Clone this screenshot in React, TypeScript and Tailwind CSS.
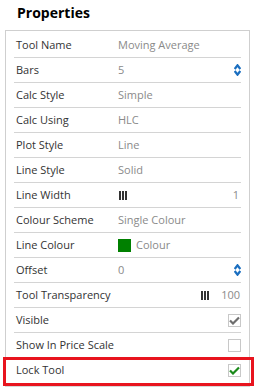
import React from "react";

const Bars = () => (
  <svg width="8" height="9" viewBox="0 0 8 9" className="inline-block">
    <rect x="0" y="0" width="2" height="9" fill="#333" />
    <rect x="3" y="0" width="2" height="9" fill="#333" />
    <rect x="6" y="0" width="2" height="9" fill="#333" />
  </svg>
);

const Spinner = () => (
  <svg width="7" height="12" viewBox="0 0 7 12">
    <path d="M0.7 5 L3.5 1.3 L6.3 5" fill="none" stroke="#1b6fc0" strokeWidth="2.2" />
    <path d="M0.7 7 L3.5 10.7 L6.3 7" fill="none" stroke="#1b6fc0" strokeWidth="2.2" />
  </svg>
);

const Check = ({ color, checked, border }: { color: string; checked: boolean; border: string }) => (
  <div className={`w-[13px] h-[13px] border ${border} bg-white flex items-center justify-center`}>
    {checked && (
      <svg width="11" height="9" viewBox="0 0 11 9">
        <path d="M1 4.5 L4 7.5 L10 1.5" fill="none" stroke={color} strokeWidth="2.2" />
      </svg>
    )}
  </div>
);

type Row = { label: string; value?: React.ReactNode; right?: React.ReactNode };

const rows: Row[] = [
  { label: "Tool Name", value: "Moving Average" },
  { label: "Bars", value: "5", right: <Spinner /> },
  { label: "Calc Style", value: "Simple" },
  { label: "Calc Using", value: "HLC" },
  { label: "Plot Style", value: "Line" },
  { label: "Line Style", value: "Solid" },
  {
    label: "Line Width",
    value: (
      <span className="pl-[1px] flex items-center">
        <Bars />
      </span>
    ),
    right: <span className="text-[#8a8a8a] pr-[2px]">1</span>,
  },
  { label: "Colour Scheme", value: "Single Colour" },
  {
    label: "Line Colour",
    value: (
      <span className="flex items-center gap-[5px]">
        <span className="w-[13px] h-[13px] bg-[#008000] inline-block" />
        <span>Colour</span>
      </span>
    ),
  },
  { label: "Offset", value: "0", right: <Spinner /> },
  {
    label: "Tool Transparency",
    right: (
      <span className="flex items-center gap-[12px] pr-[1px]">
        <Bars />
        <span className="text-[#8a8a8a]">100</span>
      </span>
    ),
  },
  { label: "Visible", right: <Check color="#6e6e6e" checked border="border-[#c8c8c8]" /> },
  { label: "Show In Price Scale", right: <Check color="#6e6e6e" checked={false} border="border-[#c8c8c8]" /> },
  { label: "Lock Tool", right: <Check color="#1a8a1a" checked border="border-[#c8c8c8]" /> },
];

export default function App() {
  return (
    <div
      className="w-[256px] h-[392px] bg-white text-[11px] text-[#333]"
      style={{ fontFamily: '"Open Sans", sans-serif' }}
    >
      <div className="h-[30px] pl-[17px] pt-[1px] text-[14px] font-bold text-black leading-[24px]">
        Properties
      </div>
      <div className="ml-[5px] w-[245px] border border-[#cfcfcf] px-[8px] pt-[2px] pb-[2px] shadow-[0_1px_0_#d8d8d8]">
        {rows.map((r, i) => {
          const last = i === rows.length - 1;
          return (
            <div
              key={r.label}
              className={`relative h-[25px] flex items-center ${last ? "" : "border-b border-[#d4d4d4]"}`}
            >
              <div className="w-[103px] pl-[2px] shrink-0 whitespace-nowrap">{r.label}</div>
              <div className="flex-1 text-[#8a8a8a] pl-[1px] flex items-center">{r.value}</div>
              {r.right && <div className="flex items-center pr-[0px]">{r.right}</div>}
              {last && (
                <div className="absolute left-[-11px] right-[-13px] top-[-1px] bottom-[-3px] border-[3px] border-[#e8141e] pointer-events-none" />
              )}
            </div>
          );
        })}
      </div>
    </div>
  );
}
